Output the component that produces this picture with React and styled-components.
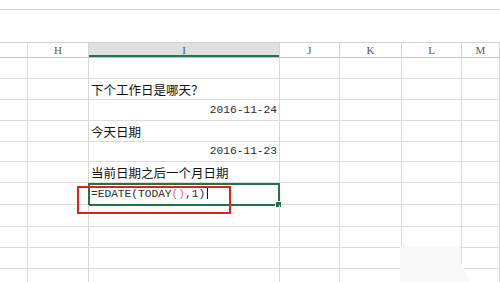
import React from 'react';
import styled, { createGlobalStyle } from 'styled-components';

const GlobalStyle = createGlobalStyle`
  html, body {
    margin: 0;
    padding: 0;
    background: #ffffff;
    overflow: hidden;
  }
`;

const COLS = '28px 61px 191px 60px 62px 60px 1fr';
const COL_NAMES = ['', 'H', 'I', 'J', 'K', 'L', 'M'];
const ROW_HEIGHTS = [21, 21, 21, 21, 20, 21, 22, 22, 21, 21, 21];

const rows = [
  {},
  { text: '下个工作日是哪天？' },
  { date: '2016-11-24' },
  { text: '今天日期' },
  { date: '2016-11-23' },
  { text: '当前日期之后一个月日期' },
  { formula: true },
  {},
  {},
  {},
  {},
];

const Page = styled.div`
  position: relative;
  width: 500px;
  height: 282px;
  overflow: hidden;
  background: #fff;
`;

const TopStrip = styled.div`
  height: 9px;
  border-bottom: 1px solid #d6d6d6;
`;

const FormulaSpace = styled.div`
  height: 32px;
`;

const Row = styled.div`
  display: grid;
  grid-template-columns: ${COLS};
  height: ${(p) => p.h}px;
  box-sizing: border-box;
  border-bottom: 1px solid #dcdcdc;
`;

const HeaderRow = styled(Row)`
  border-top: 1px solid #d2d2d2;
  border-bottom: 1px solid #c4c4c4;
`;

const HeadCell = styled.div`
  display: flex;
  align-items: center;
  justify-content: center;
  border-right: 1px solid ${(p) => (p.first ? '#dcdcdc' : '#d4d4d4')};
  background: ${(p) => (p.active ? '#e0e0e0' : '#fff')};
  box-shadow: ${(p) => (p.active ? 'inset 0 -2px 0 #217346' : 'none')};
  font-family: "Liberation Serif", "DejaVu Serif", serif;
  font-size: 11px;
  color: #555555;
  line-height: 1;
`;

const Cell = styled.div`
  position: relative;
  display: flex;
  align-items: flex-end;
  justify-content: ${(p) => (p.right ? 'flex-end' : 'flex-start')};
  padding: 0 2px 2px 2px;
  border-right: 1px solid #d8d8d8;
  white-space: nowrap;
  color: ${(p) => (p.mono ? '#2a2a2a' : '#111')};
  font-family: ${(p) =>
    p.mono
      ? '"Liberation Mono", "DejaVu Sans Mono", monospace'
      : '"Noto Sans CJK SC", "Noto Sans", sans-serif'};
  font-size: ${(p) => (p.mono ? '11.2px' : '12.5px')};
  font-weight: 400;
  line-height: 15px;
`;

const ActiveBox = styled.div`
  position: absolute;
  left: -1px;
  top: 0;
  right: -1px;
  bottom: -2px;
  border: 2px solid #217346;
  pointer-events: none;
`;

const FillHandle = styled.div`
  position: absolute;
  right: -4px;
  bottom: -4px;
  width: 5px;
  height: 5px;
  background: #217346;
  border: 1px solid #fff;
`;

const Paren = styled.span`
  color: #e06a6a;
`;

const Caret = styled.span`
  display: inline-block;
  width: 1px;
  height: 13px;
  margin-left: 2px;
  background: #111;
  vertical-align: -2px;
`;

const Annotation = styled.div`
  position: absolute;
  left: 77px;
  top: 186px;
  width: 154px;
  height: 28px;
  box-sizing: border-box;
  border: 2px solid #e2211f;
`;

const Watermark = styled.svg`
  position: absolute;
  left: 398px;
  top: 246px;
`;

function Formula() {
  return (
    <span>
      =EDATE(TODAY<Paren>()</Paren>,1)
      <Caret />
    </span>
  );
}

export default function App() {
  return (
    <>
      <GlobalStyle />
      <Page>
        <TopStrip />
        <FormulaSpace />
        <HeaderRow h={16}>
          {COL_NAMES.map((name, i) => (
            <HeadCell key={i} first={i === 0} active={name === 'I'}>
              {name}
            </HeadCell>
          ))}
        </HeaderRow>
        {rows.map((r, i) => (
          <Row key={i} h={ROW_HEIGHTS[i]}>
            <Cell />
            <Cell />
            <Cell right={!!r.date} mono={!!(r.date || r.formula)}>
              {r.text}
              {r.date}
              {r.formula && <Formula />}
              {r.formula && (
                <ActiveBox>
                  <FillHandle />
                </ActiveBox>
              )}
            </Cell>
            <Cell />
            <Cell />
            <Cell />
            <Cell />
          </Row>
        ))}
        <Annotation />
        <Watermark width="80" height="36" viewBox="0 0 80 36">
          <polygon points="2,0 62,0 62,14 72,36 2,36" fill="#f8f8f8" />
        </Watermark>
      </Page>
    </>
  );
}
